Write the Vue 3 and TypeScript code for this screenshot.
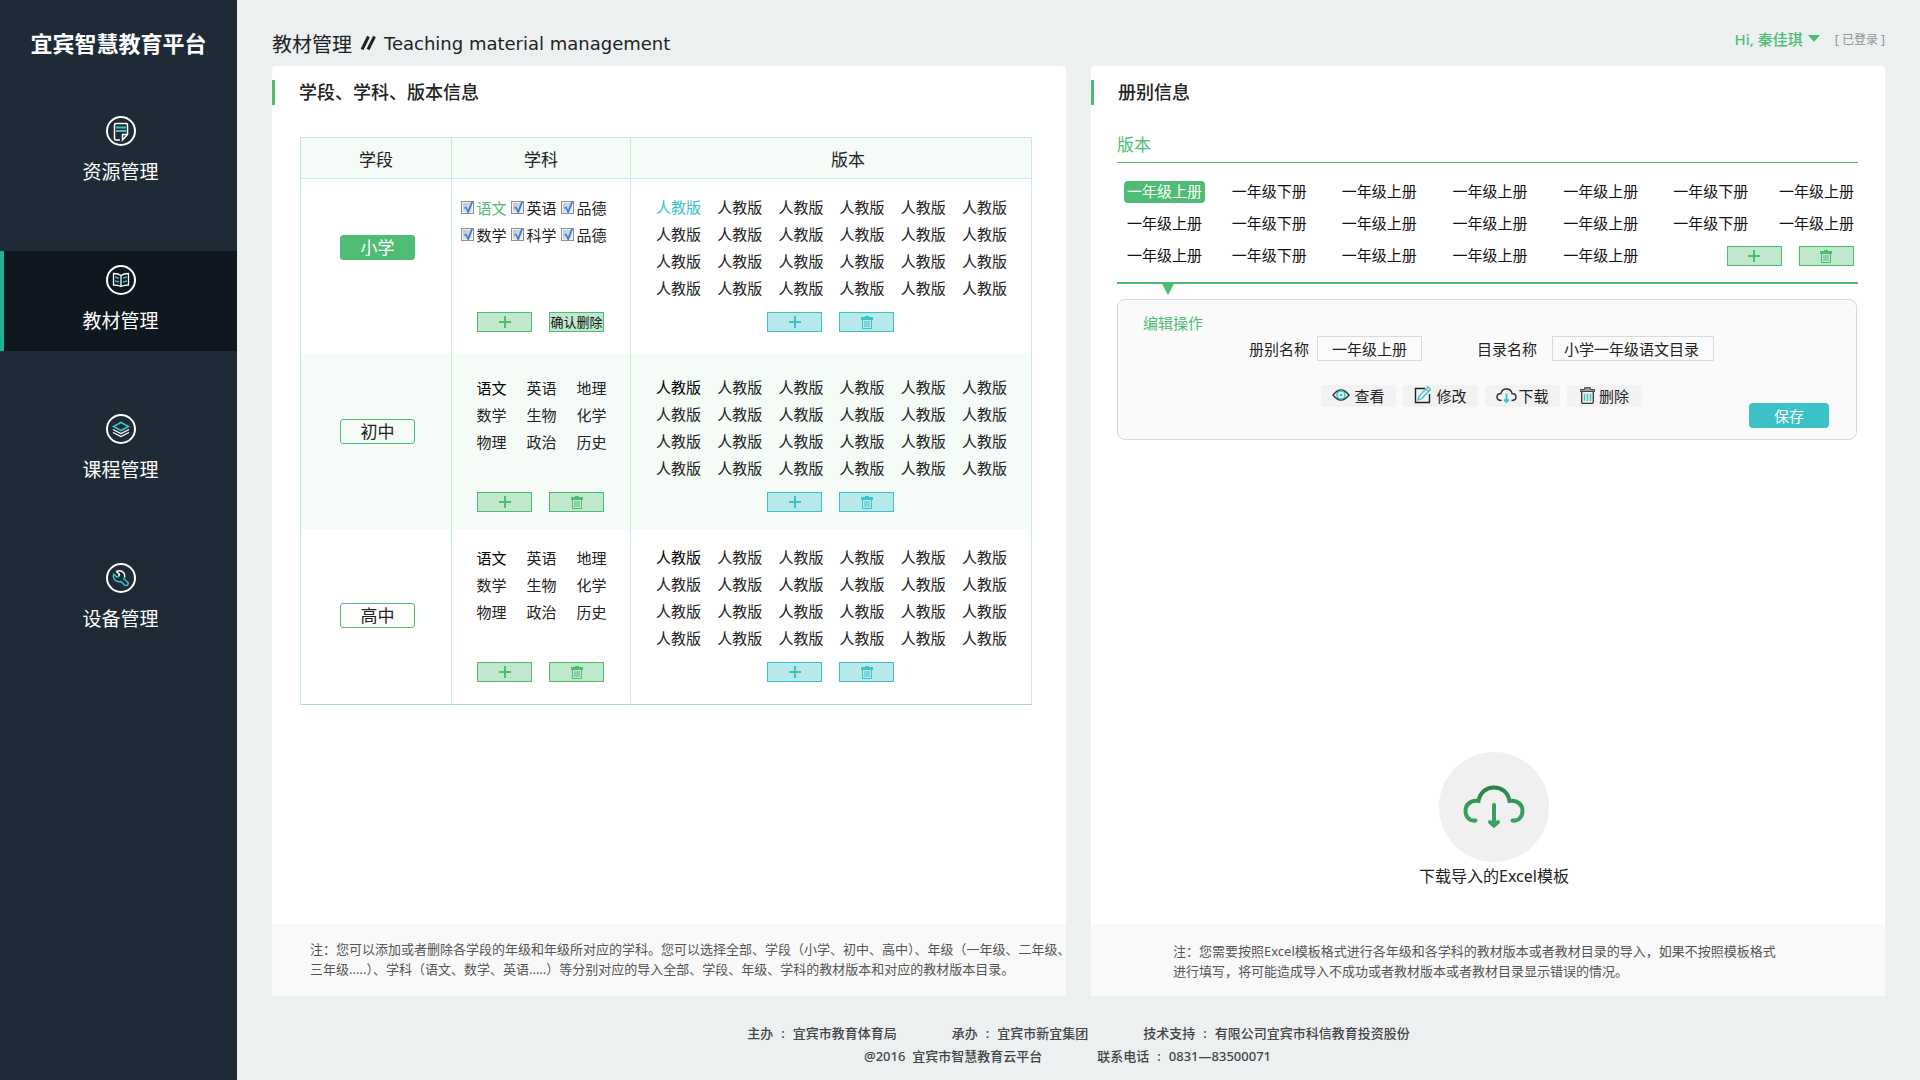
<script setup lang="ts">
import { ref } from 'vue'

interface NavItem {
  key: string
  label: string
}

interface Subject {
  name: string
  checked?: boolean
}

interface Stage {
  name: string
  selecting: boolean
  subjects: Subject[]
}

const navItems: NavItem[] = [
  { key: 'resource', label: '资源管理' },
  { key: 'material', label: '教材管理' },
  { key: 'course', label: '课程管理' },
  { key: 'device', label: '设备管理' },
]
const activeNav = ref('material')

const secondarySubjects = ['语文', '英语', '地理', '数学', '生物', '化学', '物理', '政治', '历史']

const stages = ref<Stage[]>([
  {
    name: '小学',
    selecting: true,
    subjects: ['语文', '英语', '品德', '数学', '科学', '品德'].map((name) => ({ name, checked: true })),
  },
  { name: '初中', selecting: false, subjects: secondarySubjects.map((name) => ({ name })) },
  { name: '高中', selecting: false, subjects: secondarySubjects.map((name) => ({ name })) },
])
const activeStage = ref('小学')

const versions: string[] = Array.from({ length: 24 }, () => '人教版')

const volumeRow = ['一年级上册', '一年级下册', '一年级上册', '一年级上册', '一年级上册', '一年级下册', '一年级上册']
const volumes: string[] = [...volumeRow, ...volumeRow, ...volumeRow.slice(0, 5)]
const activeVolume = ref(0)

const volumeName = ref('一年级上册')
const catalogName = ref('小学一年级语文目录')
</script>

<template>
  <div class="page">
    <aside class="sidebar">
      <h1 class="logo">宜宾智慧教育平台</h1>
      <nav class="nav">
        <a
          v-for="item in navItems"
          :key="item.key"
          href="#"
          class="nav-item"
          :class="{ active: item.key === activeNav }"
          @click.prevent="activeNav = item.key"
        >
          <svg class="nav-icon" viewBox="0 0 30 30" fill="none" aria-hidden="true">
            <circle cx="15" cy="15" r="14" stroke="#fff" stroke-width="2" />
            <g v-if="item.key === 'resource'">
              <path d="M14 24H10Q8.500 24 8.500 22.500V9Q8.500 7.500 10 7.500H20Q21.500 7.500 21.500 9V18.500L16.500 24V18.500H21.500" stroke="#fff" stroke-width="1.500" />
              <path d="M10 11.500H20M10 15H20" stroke="#3bc1c6" stroke-width="2" />
            </g>
            <g v-else-if="item.key === 'material'">
              <path d="M7.500 8.500C10 8.500 13 9 15 10.500C17 9 20 8.500 22.500 8.500V20C20 20 17 20.500 15 21.500C13 20.500 10 20 7.500 20ZM15 10.500V21.500" stroke="#fff" stroke-width="1.300" />
              <path d="M9 12L13 13.200M9 16L13 17M21 12L17 13.200M21 16L17 17" stroke="#3bc1c6" stroke-width="1.600" />
            </g>
            <g v-else-if="item.key === 'course'">
              <path d="M15 8.500L22.500 12.500L15 16.500L7.500 12.500Z" stroke="#3bc1c6" stroke-width="1.600" />
              <path d="M7 15.500L15 19.500L23 15.500M7 18.500L15 22.500L23 18.500" stroke="#fff" stroke-width="1.300" />
            </g>
            <g v-else stroke-width="1.500" stroke-linecap="round" stroke-linejoin="round">
              <path d="M10.500 8.500Q14.500 6.500 17.500 9.500Q19.200 11.500 18.700 14M10.500 8.500L13.500 11.500L12.500 13.500" stroke="#fff" />
              <path d="M12.500 13.500L10.700 14L7.800 11Q6.500 15 9.500 17.500Q12 19.500 15 18.500L18.500 22Q20 23.200 21.500 22Q23 20.500 21.500 19L17.500 15.500" stroke="#3bc1c6" />
            </g>
          </svg>
          <span>{{ item.label }}</span>
        </a>
      </nav>
    </aside>

    <div class="main">
      <header class="topbar">
        <h2 class="page-title">
          <span>教材管理</span>
          <svg class="slashes" viewBox="0 0 16 16" aria-hidden="true">
            <path d="M2 14.500L8.500 1.500M8 14.500L14.500 1.500" stroke="#222" stroke-width="3" />
          </svg>
          <span class="title-en">Teaching material management</span>
        </h2>
        <div class="account">
          <button type="button" class="user">
            Hi, 秦佳琪
            <svg class="caret" viewBox="0 0 12 7" aria-hidden="true"><path d="M0 0H12L6 7Z" fill="#4ebd73" /></svg>
          </button>
          <span class="login-state">[ 已登录 ]</span>
        </div>
      </header>

      <main class="panels">
        <section class="panel">
          <h3 class="panel-title">学段、学科、版本信息</h3>
          <table class="stage-table">
            <colgroup>
              <col class="col-stage" />
              <col class="col-subject" />
              <col />
            </colgroup>
            <thead>
              <tr>
                <th scope="col">学段</th>
                <th scope="col">学科</th>
                <th scope="col" class="version-head">版本</th>
              </tr>
            </thead>
            <tbody>
              <tr v-for="(stage, si) in stages" :key="stage.name" :class="{ tinted: si % 2 === 1 }">
                <td class="stage-cell">
                  <button
                    type="button"
                    class="stage-btn"
                    :class="{ active: stage.name === activeStage }"
                    @click="activeStage = stage.name"
                  >
                    {{ stage.name }}
                  </button>
                </td>
                <td class="list-cell">
                  <div class="subjects">
                    <template v-for="(subject, i) in stage.subjects" :key="i">
                      <label v-if="stage.selecting" class="subject" :class="{ green: i === 0 }">
                        <input v-model="subject.checked" type="checkbox" class="tick" />
                        {{ subject.name }}
                      </label>
                      <span v-else class="subject" :class="{ strong: i === 0 }">{{ subject.name }}</span>
                    </template>
                  </div>
                  <div class="tools">
                    <button type="button" class="tool" aria-label="添加学科">
                      <svg class="plus" viewBox="0 0 12 12" aria-hidden="true"><path d="M6 0V12M0 6H12" stroke="currentColor" stroke-width="2" /></svg>
                    </button>
                    <button v-if="stage.selecting" type="button" class="tool confirm">确认删除</button>
                    <button v-else type="button" class="tool" aria-label="删除学科">
                      <svg class="bin" viewBox="0 0 12 13" aria-hidden="true">
                        <path d="M0 1H4V0H8V1H12V4H0Z" fill="currentColor" />
                        <path d="M1.500 4V12.500H10.500V4M4 5V11M6 5V11M8 5V11" fill="none" stroke="currentColor" />
                      </svg>
                    </button>
                  </div>
                </td>
                <td class="list-cell version-cell">
                  <div class="versions">
                    <span
                      v-for="(version, i) in versions"
                      :key="i"
                      :class="{ cyan: i === 0 && stage.name === activeStage, strong: i === 0 && stage.name !== activeStage }"
                    >{{ version }}</span>
                  </div>
                  <div class="tools">
                    <button type="button" class="tool cyan-tool" aria-label="添加版本">
                      <svg class="plus" viewBox="0 0 12 12" aria-hidden="true"><path d="M6 0V12M0 6H12" stroke="currentColor" stroke-width="2" /></svg>
                    </button>
                    <button type="button" class="tool cyan-tool" aria-label="删除版本">
                      <svg class="bin" viewBox="0 0 12 13" aria-hidden="true">
                        <path d="M0 1H4V0H8V1H12V4H0Z" fill="currentColor" />
                        <path d="M1.500 4V12.500H10.500V4M4 5V11M6 5V11M8 5V11" fill="none" stroke="currentColor" />
                      </svg>
                    </button>
                  </div>
                </td>
              </tr>
            </tbody>
          </table>
          <p class="note">
            注：您可以添加或者删除各学段的年级和年级所对应的学科。您可以选择全部、学段（小学、初中、高中）、年级（一年级、二年级、<br />三年级.....）、学科（语文、数学、英语.....）等分别对应的导入全部、学段、年级、学科的教材版本和对应的教材版本目录。
          </p>
        </section>

        <section class="panel">
          <h3 class="panel-title">册别信息</h3>
          <div class="volume-area">
            <h4 class="volume-title">版本</h4>
            <div class="volumes">
              <button
                v-for="(volume, i) in volumes"
                :key="i"
                type="button"
                class="volume"
                :class="{ active: i === activeVolume }"
                @click="activeVolume = i"
              >
                {{ volume }}
              </button>
              <div class="tools volume-tools">
                <button type="button" class="tool" aria-label="添加册别">
                  <svg class="plus" viewBox="0 0 12 12" aria-hidden="true"><path d="M6 0V12M0 6H12" stroke="currentColor" stroke-width="2" /></svg>
                </button>
                <button type="button" class="tool" aria-label="删除册别">
                  <svg class="bin" viewBox="0 0 12 13" aria-hidden="true">
                    <path d="M0 1H4V0H8V1H12V4H0Z" fill="currentColor" />
                    <path d="M1.500 4V12.500H10.500V4M4 5V11M6 5V11M8 5V11" fill="none" stroke="currentColor" />
                  </svg>
                </button>
              </div>
            </div>

            <form class="editor" @submit.prevent>
              <h5 class="editor-title">编辑操作</h5>
              <div class="fields">
                <div class="field">
                  <label for="volume-name">册别名称</label>
                  <input id="volume-name" v-model="volumeName" type="text" class="text-input" />
                </div>
                <div class="field wide">
                  <label for="catalog-name">目录名称</label>
                  <input id="catalog-name" v-model="catalogName" type="text" class="text-input" />
                </div>
              </div>
              <div class="editor-foot">
                <div class="actions">
                  <button type="button" class="action">
                    <svg width="18" height="12" viewBox="0 0 18 12" fill="none" aria-hidden="true">
                      <path d="M1 6Q9 -4 17 6Q9 16 1 6Z" stroke="#333" stroke-width="1.300" />
                      <circle cx="9" cy="6" r="4" stroke="#3bc1c6" stroke-width="1.600" />
                      <circle cx="9" cy="6" r="1.600" fill="#3bc1c6" />
                    </svg>
                    查看
                  </button>
                  <button type="button" class="action">
                    <svg width="18" height="18" viewBox="0 0 18 18" fill="none" aria-hidden="true">
                      <path d="M11 2.500H1.500V16.500H15.500V8" stroke="#222" stroke-width="1.400" />
                      <path d="M4 14L5 10L14 1L16.500 3.500L8 12.500ZM12 3L14.500 5.500" stroke="#3bc1c6" stroke-width="1.300" />
                    </svg>
                    修改
                  </button>
                  <button type="button" class="action tight">
                    <svg width="21" height="15" viewBox="0 0 21 15" fill="none" aria-hidden="true">
                      <path d="M5.500 12.500C2.500 12.500 1 11 1 9C1 7 2.500 5.500 5 5.500C5.500 2.500 7.500 1 10.500 1C13.500 1 15.500 2.500 16 5.500C18.500 5.500 20 7 20 9C20 11 18.500 12.500 15.500 12.500" stroke="#333" stroke-width="1.500" />
                      <path d="M10.500 5.500V13.500M8 11.500L10.500 14L13 11.500" stroke="#3bc1c6" stroke-width="1.800" />
                    </svg>
                    下载
                  </button>
                  <button type="button" class="action">
                    <svg width="15" height="17" viewBox="0 0 15 17" fill="none" aria-hidden="true">
                      <path d="M0.500 4.500V2.500H4.500V0.700H10.500V2.500H14.500V4.500Z" stroke="#444" fill="#999" />
                      <path d="M1.700 4.500V15Q1.700 16.300 3 16.300H12Q13.300 16.300 13.300 15V4.500" stroke="#333" stroke-width="1.300" />
                      <path d="M4.500 6.500V14M7.500 6.500V14M10.500 6.500V14" stroke="#3bc1c6" stroke-width="1.500" />
                    </svg>
                    删除
                  </button>
                </div>
                <button type="submit" class="save">保存</button>
              </div>
            </form>
          </div>

          <a href="#" class="download" @click.prevent>
            <span class="download-disc">
              <svg width="62" height="44" viewBox="0 0 62 44" fill="none" aria-hidden="true">
                <defs>
                  <linearGradient id="cloud-green" x1="0" y1="0" x2="0" y2="44" gradientUnits="userSpaceOnUse">
                    <stop offset="0" stop-color="#2b7c49" />
                    <stop offset="0.500" stop-color="#389c5c" />
                    <stop offset="1" stop-color="#3aa561" />
                  </linearGradient>
                </defs>
                <g stroke="url(#cloud-green)" stroke-width="4" stroke-linecap="round">
                  <path d="M12.500 35.500C6 36.500 2.500 31 2.500 26C2.500 20 7 15 15.500 16C17 7 23.500 2.500 31 2.500C38.500 2.500 45 7 46.500 16C55 15 59.500 20 59.500 26C59.500 31 56 36.500 49.500 35.500" />
                  <path d="M31.010 20L31 40M27 37L31 40.500L35 37" />
                </g>
              </svg>
            </span>
            <span>下载导入的Excel模板</span>
          </a>

          <p class="note note-right">
            注：您需要按照Excel模板格式进行各年级和各学科的教材版本或者教材目录的导入，如果不按照模板格式<br />进行填写，将可能造成导入不成功或者教材版本或者教材目录显示错误的情况。
          </p>
        </section>
      </main>

      <footer class="footer">
        <div class="footer-line first">
          <span>主办<i>:</i>宜宾市教育体育局</span>
          <span>承办<i>:</i>宜宾市新宜集团</span>
          <span>技术支持<i>:</i>有限公司宜宾市科信教育投资股份</span>
        </div>
        <div class="footer-line">
          <span>@2016&nbsp; 宜宾市智慧教育云平台</span>
          <span>联系电话<i>:</i>0831—83500071</span>
        </div>
      </footer>
    </div>
  </div>
</template>

<style>
body {
  margin: 0;
  background: #ecf0f1;
}
</style>

<style scoped>
.page {
  display: flex;
  min-height: 100vh;
  font-family: "Noto Sans", "Noto Sans CJK SC", sans-serif;
  font-size: 15px;
  color: #222;
  background: #ecf0f1;
}
.page * {
  box-sizing: border-box;
}
h1, h2, h3, h4, h5, p {
  margin: 0;
  font-weight: 400;
}
button, input {
  margin: 0;
  padding: 0;
  font: inherit;
  color: inherit;
}
button {
  border: 0;
  background: none;
  cursor: pointer;
}
a {
  color: inherit;
  text-decoration: none;
}

/* sidebar */
.sidebar {
  flex: 0 0 237px;
  background: #1e2b36;
  color: #fff;
}
.logo {
  height: 102px;
  padding-top: 27px;
  font-size: 22px;
  line-height: 32px;
  font-weight: 700;
  text-align: center;
}
.nav {
  display: flex;
  flex-direction: column;
  gap: 49px;
}
.nav-item {
  display: flex;
  flex-direction: column;
  align-items: center;
  gap: 12px;
  height: 100px;
  padding-top: 14px;
  border-left: 4px solid transparent;
  font-size: 19px;
  line-height: 28px;
}
.nav-item.active {
  background: #0f1821;
  border-left-color: #1ab394;
}
.nav-icon {
  width: 30px;
  height: 30px;
}

/* top bar */
.main {
  flex: 1;
  min-width: 0;
  display: flex;
  flex-direction: column;
  padding: 0 35px;
}
.topbar {
  display: flex;
  justify-content: space-between;
  height: 66px;
}
.page-title {
  display: flex;
  align-items: center;
  gap: 8px;
  height: 28px;
  margin-top: 29px;
  font-size: 20px;
}
.slashes {
  width: 16px;
  height: 16px;
}
.title-en {
  font-family: "DejaVu Sans", sans-serif;
  font-size: 18px;
}
.account {
  display: flex;
  align-items: center;
  gap: 15px;
  height: 24px;
  margin-top: 27px;
}
.user {
  display: flex;
  align-items: center;
  gap: 5px;
  padding-bottom: 2px;
  font-weight: 500;
  color: #4ebd73;
}
.caret {
  width: 12px;
  height: 7px;
}
.login-state {
  font-size: 12px;
  color: #8f9394;
}

/* panels */
.panels {
  flex: 1;
  display: flex;
  gap: 25px;
}
.panel {
  flex: 1 1 0;
  min-width: 0;
  display: flex;
  flex-direction: column;
  padding-top: 14px;
  background: #fff;
  border-radius: 4px 4px 0 0;
}
.panel-title {
  padding-left: 24px;
  border-left: 3px solid #4ebd73;
  font-size: 18px;
  line-height: 25px;
  font-weight: 500;
}

/* stage table */
.stage-table {
  width: calc(100% - 62px);
  margin: 32px 34px 40px 28px;
  table-layout: fixed;
  border-collapse: collapse;
  border: 1px solid #c9ecd6;
  border-bottom-color: #a5dcb9;
}
.col-stage {
  width: 151px;
}
.col-subject {
  width: 179px;
}
th, td {
  padding: 0;
  border-left: 1px solid #c9ecd6;
}
th {
  height: 41px;
  border-bottom: 1px solid #c9ecd6;
  background: #f5fbf7;
  font-size: 17px;
  font-weight: 400;
}
.version-head {
  padding-left: 34px;
}
.tinted {
  background: #f5fbf7;
}
.stage-cell {
  padding: 0 0 3px 3px;
  text-align: center;
  vertical-align: middle;
}
tr:first-child .stage-cell {
  padding-bottom: 38px;
}
.tinted .stage-cell {
  padding-bottom: 20px;
}
.stage-btn {
  width: 75px;
  height: 25px;
  border: 1px solid #4ebd73;
  border-radius: 3px;
  font-size: 17px;
  line-height: 23px;
}
.stage-btn.active {
  background: #4ebd73;
  color: #fff;
}
.list-cell {
  padding: 15px 0 22px;
  vertical-align: top;
}
.tinted .list-cell {
  padding: 20px 0 17px;
}
.subjects {
  display: grid;
  grid-template-columns: repeat(3, 45px);
  grid-auto-rows: 27px;
  gap: 0 5px;
  justify-content: center;
  align-content: start;
  height: 108px;
  padding-right: 14px;
}
.subject {
  display: flex;
  align-items: center;
  justify-content: flex-end;
  gap: 2px;
  white-space: nowrap;
}
.tick {
  appearance: none;
  position: relative;
  flex: none;
  width: 13px;
  height: 13px;
  border: 1px solid #8e8f8f;
  background: linear-gradient(135deg, #b9bfc9, #f2f3f5);
  box-shadow: inset 0 0 0 1px #f4f4f4;
}
.tick:checked::before {
  content: "";
  position: absolute;
  inset: 0;
  background: #3c7fe0;
  clip-path: polygon(15% 50%, 35% 42%, 50% 70%, 78% 0, 96% 0, 58% 100%, 46% 100%, 30% 58%, 18% 62%);
}
.green {
  color: #4ebd73;
}
.cyan {
  color: #3bc1c6;
}
.strong {
  color: #000;
}
.version-cell .versions {
  display: grid;
  grid-template-columns: repeat(6, 45px);
  grid-auto-rows: 27px;
  justify-content: space-between;
  align-items: center;
  padding: 0 24px 0 25px;
  line-height: 27px;
}
.tools {
  display: flex;
  justify-content: center;
  gap: 17px;
  margin-top: 10px;
  padding-right: 1px;
}
.tool {
  display: flex;
  align-items: center;
  justify-content: center;
  width: 55px;
  height: 20px;
  border: 1px solid #4ebd73;
  background: #bfe8cd;
  color: #4ebd73;
}
.cyan-tool {
  border-color: #3bc1c6;
  background: #b8e9ea;
  color: #3bc1c6;
}
.confirm {
  font-size: 13px;
  line-height: 18px;
  color: #111;
  white-space: nowrap;
}
.plus {
  width: 12px;
  height: 12px;
}
.bin {
  width: 12px;
  height: 13px;
}

/* notes */
.note {
  min-height: 72px;
  margin-top: auto;
  padding: 15px 0 17px 38px;
  background: #f9f9f9;
  font-size: 13px;
  line-height: 20px;
  color: #555;
  white-space: nowrap;
}
.note-right {
  margin-top: 0;
  padding: 17px 0 15px 82px;
}

/* volumes */
.volume-area {
  margin: 27px 27px 0 26px;
}
.volume-title {
  height: 31px;
  border-bottom: 1px solid #4ebd73;
  font-size: 17px;
  line-height: 26px;
  color: #4ebd73;
}
.volumes {
  position: relative;
  display: grid;
  grid-template-columns: 105fr 110fr 111fr 111fr 110fr 106fr 82px;
  grid-auto-rows: 32px;
  align-items: center;
  justify-items: start;
  padding: 13px 0 10px 7px;
  border-bottom: 2px solid #4ebd73;
}
.volumes::after {
  content: "";
  position: absolute;
  left: 44px;
  top: 100%;
  width: 14px;
  height: 13px;
  background: #4ebd73;
  clip-path: polygon(0 0, 100% 0, 50% 100%);
}
.volume {
  width: 81px;
  height: 22px;
  padding-bottom: 2px;
  border-radius: 4px;
  line-height: 20px;
  white-space: nowrap;
  color: #111;
}
.volume.active {
  background: #4ebd73;
  color: #fff;
}
.volume-tools {
  grid-column: 6 / 8;
  justify-self: end;
  margin: 0 3px 0 0;
}

/* editor */
.editor {
  margin: 15px 1px 0 0;
  padding: 13px 27px 11px 16px;
  border: 1px solid #dadada;
  border-radius: 8px;
  background: #fafafa;
}
.editor-title {
  padding-left: 9px;
  font-size: 15px;
  line-height: 20px;
  color: #4ebd73;
}
.fields {
  display: flex;
  justify-content: center;
  gap: 55px;
  margin-top: 3px;
}
.field {
  display: flex;
  align-items: center;
  gap: 8px;
}
.text-input {
  width: 105px;
  height: 25px;
  padding-left: 14px;
  border: 1px solid #dadada;
  background: #fbfbfb;
  outline: 0;
}
.field.wide {
  gap: 15px;
}
.field.wide .text-input {
  width: 162px;
  padding-left: 11px;
}
.editor-foot {
  display: grid;
  grid-template-columns: 1fr auto 1fr;
  height: 43px;
  margin-top: 24px;
}
.actions {
  grid-column: 2;
  display: flex;
  gap: 7px;
}
.action {
  display: flex;
  align-items: center;
  justify-content: center;
  gap: 4px;
  width: 75px;
  height: 22px;
  padding-bottom: 2px;
  border-radius: 3px;
  background: #f2f2f2;
  white-space: nowrap;
}
.action.tight {
  gap: 1px;
}
.save {
  align-self: end;
  justify-self: end;
  width: 80px;
  height: 25px;
  padding-bottom: 1px;
  border-radius: 4px;
  background: #3bc1c6;
  color: #fff;
}

/* template download */
.download {
  display: flex;
  flex-direction: column;
  align-items: center;
  align-self: center;
  gap: 3px;
  margin: auto 0 37px;
  padding-left: 12px;
  font-size: 16px;
  line-height: 22px;
}
.download-disc {
  display: flex;
  align-items: center;
  justify-content: center;
  width: 110px;
  height: 110px;
  border-radius: 50%;
  background: #f0f0f0;
}

/* footer */
.footer {
  height: 84px;
  padding-top: 26px;
  font-size: 13px;
  line-height: 23px;
  font-weight: 500;
  color: #444;
}
.footer-line {
  display: flex;
  justify-content: center;
  gap: 55px;
  padding-right: 22px;
  white-space: nowrap;
}
.footer-line.first {
  padding-right: 0;
}
.footer i {
  padding: 0 8px;
  font-style: normal;
}
</style>
